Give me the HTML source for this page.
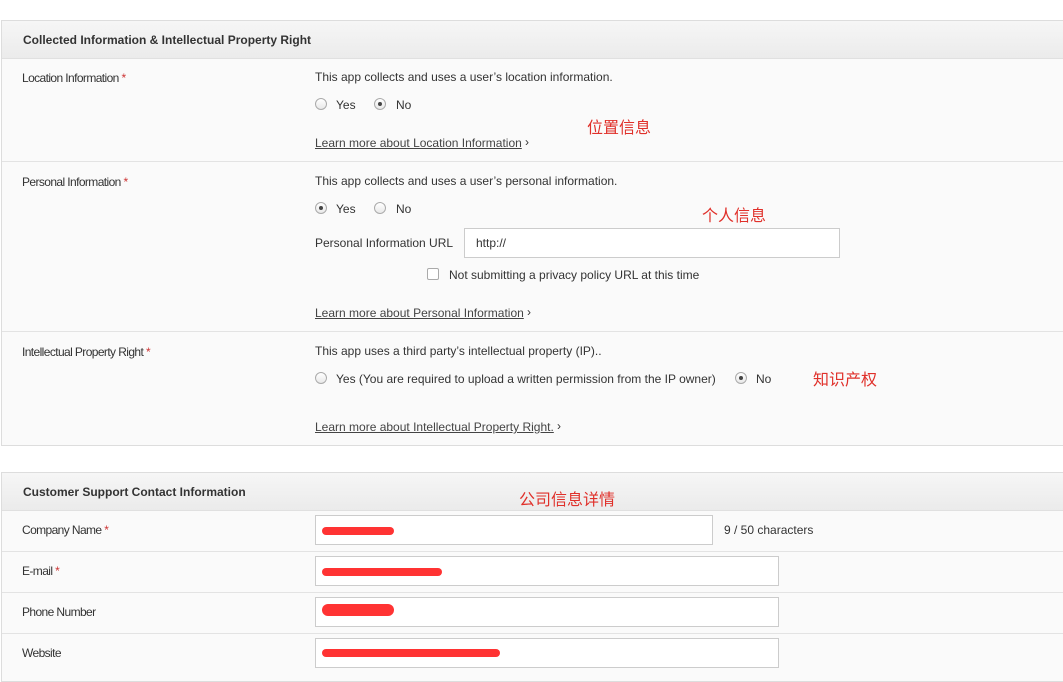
<!DOCTYPE html>
<html><head><meta charset="utf-8"><style>
*{margin:0;padding:0;box-sizing:border-box}
body{width:1063px;height:673px;background:#fff;font-family:"Liberation Sans",Arial,sans-serif;font-size:12px;color:#333;position:relative;overflow:hidden}
.a{position:absolute;white-space:nowrap}
.panel{position:absolute;left:1px;width:1070px;border:1px solid #ddd;background:#fafafa}
.hd{position:absolute;left:0;right:0;top:0;height:38px;background:linear-gradient(#f6f6f6,#ebebeb);border-bottom:1px solid #e0e0e0}
.hd span{position:absolute;left:21px;top:12px;font-weight:bold;font-size:12px;color:#333}
.line{position:absolute;left:0;right:0;height:1px;background:#e3e3e3}
.lbl{letter-spacing:-0.6px;font-size:12px}
.req{color:#c33}
.radio{position:absolute;width:12px;height:12px;border:1px solid #aaa;border-radius:50%;background:linear-gradient(#fff,#e8e8e8)}
.radio.on::after{content:"";position:absolute;left:3px;top:3px;width:4px;height:4px;border-radius:50%;background:#444}
.lnk{text-decoration:underline;color:#444}
.cn{color:#e0302a;font-size:16px;font-family:"Noto Sans CJK SC",sans-serif}
.inp{position:absolute;height:30px;border:1px solid #ccc;background:#fff}
.red{position:absolute;height:8px;background:#f33;border-radius:4px}
</style></head><body>
<div class="panel" style="top:20px;height:426px">
<div class="hd"><span>Collected Information &amp; Intellectual Property Right</span></div>
<div class="line" style="top:140px"></div>
<div class="line" style="top:310px"></div>
</div>
<div class="a lbl" style="left:22px;top:71px">Location Information <span class="req">*</span></div>
<div class="a" style="left:315px;top:70px">This app collects and uses a user’s location information.</div>
<div class="radio" style="left:315px;top:98px"></div><div class="a" style="left:336px;top:98px">Yes</div>
<div class="radio on" style="left:374px;top:98px"></div><div class="a" style="left:396px;top:98px">No</div>
<div class="a cn" style="left:587px;top:114px">位置信息</div>
<div class="a lnk" style="left:315px;top:136px">Learn more about Location Information</div><div class="a" style="left:525px;top:135px">›</div>

<div class="a lbl" style="left:22px;top:175px">Personal Information <span class="req">*</span></div>
<div class="a" style="left:315px;top:174px">This app collects and uses a user’s personal information.</div>
<div class="radio on" style="left:315px;top:202px"></div><div class="a" style="left:336px;top:202px">Yes</div>
<div class="radio" style="left:374px;top:202px"></div><div class="a" style="left:396px;top:202px">No</div>
<div class="a cn" style="left:702px;top:202px">个人信息</div>
<div class="a" style="left:315px;top:236px">Personal Information URL</div>
<div class="inp" style="left:464px;top:228px;width:376px"><span class="a" style="left:11px;top:7px">http://</span></div>
<div class="a" style="left:427px;top:268px;width:12px;height:12px;border:1px solid #aaa;background:#fff;border-radius:2px"></div>
<div class="a" style="left:449px;top:268px">Not submitting a privacy policy URL at this time</div>
<div class="a lnk" style="left:315px;top:306px">Learn more about Personal Information</div><div class="a" style="left:527px;top:305px">›</div>

<div class="a lbl" style="left:22px;top:345px">Intellectual Property Right <span class="req">*</span></div>
<div class="a" style="left:315px;top:344px">This app uses a third party’s intellectual property (IP)..</div>
<div class="radio" style="left:315px;top:372px"></div><div class="a" style="left:336px;top:372px">Yes (You are required to upload a written permission from the IP owner)</div>
<div class="radio on" style="left:735px;top:372px"></div><div class="a" style="left:756px;top:372px">No</div>
<div class="a cn" style="left:813px;top:366px">知识产权</div>
<div class="a lnk" style="left:315px;top:420px">Learn more about Intellectual Property Right.</div><div class="a" style="left:557px;top:419px">›</div>

<div class="panel" style="top:472px;height:210px">
<div class="hd"><span>Customer Support Contact Information</span></div>
<div class="line" style="top:78px"></div>
<div class="line" style="top:119px"></div>
<div class="line" style="top:160px"></div>
</div>
<div class="a cn" style="left:519px;top:486px">公司信息详情</div>
<div class="a lbl" style="left:22px;top:523px">Company Name <span class="req">*</span></div>
<div class="inp" style="left:315px;top:515px;width:398px"></div><div class="red" style="left:322px;top:527px;width:72px"></div>
<div class="a" style="left:724px;top:523px">9 / 50 characters</div>
<div class="a lbl" style="left:22px;top:564px">E-mail <span class="req">*</span></div>
<div class="inp" style="left:315px;top:556px;width:464px"></div><div class="red" style="left:322px;top:568px;width:120px"></div>
<div class="a lbl" style="left:22px;top:605px">Phone Number</div>
<div class="inp" style="left:315px;top:597px;width:464px"></div><div class="red" style="left:322px;top:604px;width:72px;height:12px;border-radius:6px"></div>
<div class="a lbl" style="left:22px;top:646px">Website</div>
<div class="inp" style="left:315px;top:638px;width:464px"></div><div class="red" style="left:322px;top:649px;width:178px"></div>
</body></html>
